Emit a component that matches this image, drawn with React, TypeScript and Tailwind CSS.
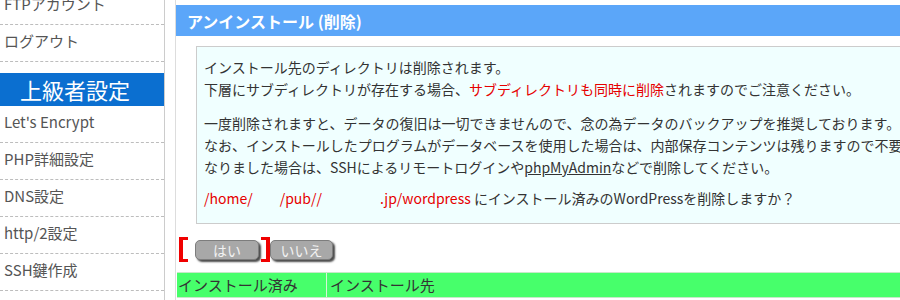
import React from 'react'

const menuTop = ['FTPアカウント', 'ログアウト']
const menuAdvanced = ["Let's Encrypt", 'PHP詳細設定', 'DNS設定', 'http/2設定', 'SSH鍵作成']

function MenuItem({ label }: { label: string }) {
  return (
    <div className="h-[37px] flex items-center pl-[4px] pb-[4px] border-b border-dashed border-[#bdbdbd] text-[15px] text-[#555] whitespace-nowrap">
      {label}
    </div>
  )
}

function Bracket({ side }: { side: 'left' | 'right' }) {
  return (
    <span
      className={`block w-[9px] h-[25px] border-y-[3px] border-[#f00000] ${
        side === 'left' ? 'border-l-[4px]' : 'border-r-[4px]'
      }`}
    />
  )
}

function GrayButton({ label, width }: { label: string; width: string }) {
  return (
    <button
      className={`${width} h-[20px] rounded-[5px] border border-[#7d7d7d] bg-[#a8a8a8] text-[14px] leading-none text-[#f2f2f2] shadow-[2px_2px_2px_#4a4a4a] flex items-center justify-center`}
    >
      {label}
    </button>
  )
}

export default function App() {
  return (
    <div className="w-[900px] h-[300px] overflow-hidden bg-white flex font-['Noto_Sans_CJK_JP',sans-serif] text-[#333]">
      {/* sidebar */}
      <aside className="w-[165px] shrink-0 -mt-[12px] border-r border-[#cccccc]">
        {menuTop.map(m => (
          <MenuItem key={m} label={m} />
        ))}
        <div className="mt-[11px] h-[33px] bg-[#0b6fd0] text-white text-[22px] leading-none flex items-center pl-[20px] pb-[2px] whitespace-nowrap">
          上級者設定
        </div>
        {menuAdvanced.map(m => (
          <MenuItem key={m} label={m} />
        ))}
      </aside>

      {/* content */}
      <main className="ml-[10px] w-[1000px] shrink-0 border-l border-[#dddddd] pt-[5px]">
        <div className="h-[31px] bg-[#5ba6f9] text-white font-bold text-[16px] flex items-center pl-[11px]">
          アンインストール (削除)
        </div>

        <div className="mt-[10px] ml-[20px] border border-[#cccccc] bg-[#f0ffff] pl-[7px] pt-[9px] pb-[14px] text-[14px] leading-[22px] whitespace-nowrap">
          <p>
            インストール先のディレクトリは削除されます。
            <br />
            下層にサブディレクトリが存在する場合、
            <span className="text-[#e60000]">サブディレクトリも同時に削除</span>
            されますのでご注意ください。
          </p>
          <p className="mt-[12px]">
            一度削除されますと、データの復旧は一切できませんので、念の為データのバックアップを推奨しております。
            <br />
            なお、インストールしたプログラムがデータベースを使用した場合は、内部保存コンテンツは残りますので不要に
            <br />
            なりました場合は、SSHによるリモートログインや
            <a className="underline text-[#333]">phpMyAdmin</a>
            などで削除してください。
          </p>
          <p className="mt-[9px]">
            <span className="text-[#e60000]">
              /home/<span className="inline-block w-[27px]" />/pub//
              <span className="inline-block w-[58px]" />
              .jp/wordpress
            </span>{' '}
            にインストール済みのWordPressを削除しますか？
          </p>
        </div>

        <div className="mt-[13px] pl-[3px] flex items-center h-[25px]">
          <Bracket side="left" />
          <span className="ml-[7px]">
            <GrayButton label="はい" width="w-[64px]" />
          </span>
          <span className="ml-[2px]">
            <Bracket side="right" />
          </span>
          <GrayButton label="いいえ" width="w-[63px]" />
        </div>

        <div className="mt-[10px] ml-[1px] flex h-[26px] bg-[#47ff6b] border-y border-[#c8e8c8] text-[15px] text-[#333]">
          <div className="w-[150px] border-r border-[#d8f5d8] pl-[1px] flex items-center">インストール済み</div>
          <div className="pl-[3px] flex items-center">インストール先</div>
        </div>
      </main>
    </div>
  )
}
